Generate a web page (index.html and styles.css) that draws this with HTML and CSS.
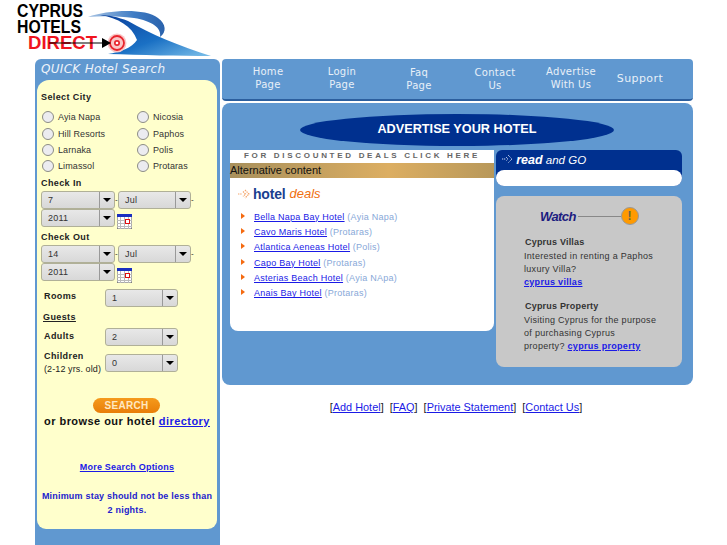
FILE: index.html
```html
<!DOCTYPE html>
<html lang="en">
<head>
    <meta charset="UTF-8">
    <title>Cyprus Hotels Direct</title>
    <link rel="stylesheet" href="styles.css">
</head>
<body>
    <div class="logo">
        <svg width="215" height="59" viewBox="0 0 215 59">
            <defs>
                <linearGradient id="swoosh" x1="0" y1="0" x2="1" y2="1">
                    <stop offset="0" stop-color="#0b3f9c"/>
                    <stop offset="0.55" stop-color="#1a70c4"/>
                    <stop offset="1" stop-color="#7cc0ea"/>
                </linearGradient>
                <linearGradient id="arc" x1="0" y1="0" x2="1" y2="0">
                    <stop offset="0" stop-color="#a8c4e4"/>
                    <stop offset="0.6" stop-color="#3f7cc4"/>
                    <stop offset="1" stop-color="#2a62ac"/>
                </linearGradient>
            </defs>
            <path d="M88 17 C108 10 145 8 158 18 C166 24 167 32 160 37 C162 28 152 21 134 18 C118 16 102 16 88 17 Z" fill="url(#arc)"/>
            <path d="M100 15 C118 18 132 26 137 40 C132 48 120 52 108 54 C140 55 180 56 211 56 C180 46 150 34 128 21 C118 17 108 15 100 15 Z" fill="url(#swoosh)"/>
            <text x="17" y="17" class="logo-black" textLength="66" lengthAdjust="spacingAndGlyphs">CYPRUS</text>
            <text x="17" y="33" class="logo-black" textLength="64" lengthAdjust="spacingAndGlyphs">HOTELS</text>
            <text x="28" y="49" class="logo-red" textLength="69" lengthAdjust="spacingAndGlyphs">DIRECT</text>
            <circle cx="117" cy="43" r="9.5" fill="#f9c6c6"/>
            <circle cx="117" cy="43" r="7" fill="none" stroke="#e8242c" stroke-width="1.8"/>
            <circle cx="117" cy="43" r="3" fill="#e8242c"/>
            <circle cx="117" cy="43" r="1.3" fill="#fff"/>
            <path d="M49 43 H104" stroke="#000" stroke-width="1.2"/>
            <path d="M102 38 L111 43 L102 48 Z" fill="#000"/>
        </svg>
    </div>

    <div class="page">
        <div class="left-col">
            <h3 class="quick-title">QUICK Hotel Search</h3>
            <div class="search-box">
                <div class="label city-label">Select City</div>
                <div class="city-grid">
                    <label class="city"><span class="radio"></span>Ayia Napa</label>
                    <label class="city"><span class="radio"></span>Nicosia</label>
                    <label class="city"><span class="radio"></span>Hill Resorts</label>
                    <label class="city"><span class="radio"></span>Paphos</label>
                    <label class="city"><span class="radio"></span>Larnaka</label>
                    <label class="city"><span class="radio"></span>Polis</label>
                    <label class="city"><span class="radio"></span>Limassol</label>
                    <label class="city"><span class="radio"></span>Protaras</label>
                </div>

                <div class="label date-label">Check In</div>
                <div class="date-row">
                    <div class="sel"><span class="sel-val">7</span><span class="sel-btn"></span></div><span class="dash">-</span>
                    <div class="sel"><span class="sel-val">Jul</span><span class="sel-btn"></span></div><span class="dash">-</span>
                </div>
                <div class="date-row">
                    <div class="sel"><span class="sel-val">2011</span><span class="sel-btn"></span></div>
                    <svg class="cal" width="15" height="15" viewBox="0 0 15 15">
                        <rect width="15" height="15" fill="#fff" stroke="#555"/>
                        <rect width="15" height="3" fill="#1a2fc0"/>
                        <path d="M0 6.5H15M0 9.5H15M0 12.5H15M3.5 3V15M7.5 3V15M11.5 3V15" stroke="#bbb" stroke-width="1"/>
                        <rect x="8.5" y="5.5" width="4" height="4" fill="#fff" stroke="#e01010"/>
                    </svg>
                </div>

                <div class="label date-label out">Check Out</div>
                <div class="date-row">
                    <div class="sel"><span class="sel-val">14</span><span class="sel-btn"></span></div><span class="dash">-</span>
                    <div class="sel"><span class="sel-val">Jul</span><span class="sel-btn"></span></div><span class="dash">-</span>
                </div>
                <div class="date-row">
                    <div class="sel"><span class="sel-val">2011</span><span class="sel-btn"></span></div>
                    <svg class="cal" width="15" height="15" viewBox="0 0 15 15">
                        <rect width="15" height="15" fill="#fff" stroke="#555"/>
                        <rect width="15" height="3" fill="#1a2fc0"/>
                        <path d="M0 6.5H15M0 9.5H15M0 12.5H15M3.5 3V15M7.5 3V15M11.5 3V15" stroke="#bbb" stroke-width="1"/>
                        <rect x="8.5" y="5.5" width="4" height="4" fill="#fff" stroke="#e01010"/>
                    </svg>
                </div>

                <div class="guest-row rooms">
                    <div class="label guest-label">Rooms</div>
                    <div class="sel"><span class="sel-val">1</span><span class="sel-btn"></span></div>
                </div>
                <div class="label guests-head">Guests</div>
                <div class="guest-row adults">
                    <div class="label guest-label">Adults</div>
                    <div class="sel"><span class="sel-val">2</span><span class="sel-btn"></span></div>
                </div>
                <div class="guest-row children">
                    <div class="label guest-label">Children<br><span class="ages">(2-12 yrs. old)</span></div>
                    <div class="sel"><span class="sel-val">0</span><span class="sel-btn"></span></div>
                </div>

                <div class="search-btn">SEARCH</div>
                <div class="browse">or browse our hotel <a href="#">directory</a></div>
                <div class="more"><a href="#">More Search Options</a></div>
                <div class="min-stay">Minimum stay should not be less than<br>2 nights.</div>
            </div>
        </div>

        <div class="right-col">
            <div class="nav">
                <a class="nav-item" href="#">Home<br>Page</a>
                <a class="nav-item login" href="#">Login<br>Page</a>
                <a class="nav-item low faq" href="#">Faq<br>Page</a>
                <a class="nav-item low" href="#">Contact<br>Us</a>
                <a class="nav-item" href="#">Advertise<br>With Us</a>
                <a class="nav-item support" href="#">Support</a>
            </div>

            <div class="main">
                <div class="advert">ADVERTISE YOUR HOTEL</div>
                <div class="columns">
                    <div class="deals">
                        <div class="deals-strip">FOR DISCOUNTED DEALS CLICK HERE</div>
                        <div class="alt-bar">Alternative content</div>
                        <div class="deals-head">
                            <svg width="12" height="12" viewBox="0 0 12 12">
                                <path d="M0 6H4M7 2L11 6L7 10M5 3.5L7.5 6L5 8.5" fill="none" stroke="#f5a468" stroke-width="1.2" stroke-dasharray="1.4 0.8"/>
                            </svg>
                            <span class="dh-hotel">hotel</span> <span class="dh-deals">deals</span>
                        </div>
                        <ul class="deal-list">
                            <li><a href="#">Bella Napa Bay Hotel</a> <span>(Ayia Napa)</span></li>
                            <li><a href="#">Cavo Maris Hotel</a> <span>(Protaras)</span></li>
                            <li><a href="#">Atlantica Aeneas Hotel</a> <span>(Polis)</span></li>
                            <li><a href="#">Capo Bay Hotel</a> <span>(Protaras)</span></li>
                            <li><a href="#">Asterias Beach Hotel</a> <span>(Ayia NApa)</span></li>
                            <li><a href="#">Anais Bay Hotel</a> <span>(Protaras)</span></li>
                        </ul>
                    </div>

                    <div class="side">
                        <div class="read-go">
                            <div class="read-title">
                                <svg width="11" height="10" viewBox="0 0 11 10">
                                    <path d="M0 5H4M6 1L10 5L6 9M4 3L6 5L4 7" fill="none" stroke="#c8d4ee" stroke-width="1" stroke-dasharray="1.2 0.7"/>
                                </svg>
                                <b>read</b> and GO
                            </div>
                            <div class="read-pill"></div>
                        </div>
                        <div class="watch">
                            <div class="watch-head">
                                <span class="watch-title">Watch</span>
                                <span class="watch-line"></span>
                                <span class="watch-badge">!</span>
                            </div>
                            <h4>Cyprus Villas</h4>
                            <p>Interested in renting a Paphos<br>luxury Villa?<br><a href="#">cyprus villas</a></p>
                            <h4 class="second">Cyprus Property</h4>
                            <p>Visiting Cyprus for the purpose<br>of purchasing Cyprus<br>property? <a href="#">cyprus property</a></p>
                        </div>
                    </div>
                </div>
            </div>

            <div class="foot-links">
                [<a href="#">Add Hotel</a>]&nbsp; [<a href="#">FAQ</a>]&nbsp; [<a href="#">Private Statement</a>]&nbsp; [<a href="#">Contact Us</a>]
            </div>
        </div>
    </div>
</body>
</html>
```

FILE: styles.css
```css
html, body {
    margin: 0;
    height: 545px;
    overflow: hidden;
    background-color: #fff;
}
body {
    font-family: "Liberation Sans", Arial, sans-serif;
    font-size: 9px;
    color: #222;
}
a {
    color: #1a1ae6;
}

/* logo */
.logo {
    height: 59px;
    line-height: 0;
}
.logo-black {
    font: bold 18px "Liberation Sans", Arial, sans-serif;
    fill: #000;
}
.logo-red {
    font: bold 18px "Liberation Sans", Arial, sans-serif;
    fill: #f0141e;
}

.page {
    display: flex;
    align-items: flex-start;
    padding-left: 35px;
}

/* left column */
.left-col {
    width: 185px;
    height: 486px;
    background-color: #6098d0;
    border-radius: 6px 6px 0 0;
    margin-right: 2px;
}
.quick-title {
    margin: 0;
    height: 21px;
    padding-left: 6px;
    font: italic normal 12px/21px "DejaVu Sans", sans-serif;
    letter-spacing: 0.3px;
    color: #eef3fa;
}
.search-box {
    box-sizing: border-box;
    width: 180px;
    height: 449px;
    margin-left: 2px;
    padding: 12px 0 0 4px;
    background-color: #ffffcc;
    border-radius: 12px 12px 9px 9px;
}
.label {
    font-weight: bold;
    letter-spacing: 0.4px;
    color: #222;
    line-height: 11px;
}
.city-grid {
    display: grid;
    grid-template-columns: 95px 1fr;
    grid-auto-rows: 16.4px;
    margin: 6px 0 0 1px;
}
.city {
    display: flex;
    align-items: center;
    letter-spacing: 0.1px;
    color: #333;
}
.radio {
    box-sizing: border-box;
    width: 12px;
    height: 12px;
    margin-right: 4px;
    border: 1px solid #8c8c84;
    border-radius: 50%;
    background-color: #ececf0;
}
.date-label {
    margin: 3px 0 2.4px;
}
.date-label.out {
    margin: 5px 0 2.5px;
}
.date-row {
    display: flex;
    align-items: flex-start;
    height: 18px;
}
.sel {
    box-sizing: border-box;
    display: flex;
    width: 74px;
    height: 18px;
    background: linear-gradient(#e8e8e8, #d8d8d8);
    border: 1px solid #b0b098;
    border-radius: 3px;
    color: #333;
    letter-spacing: 0.2px;
}
.sel-val {
    flex: 1;
    padding-left: 6px;
    line-height: 17px;
}
.sel-btn {
    position: relative;
    width: 14px;
    border-left: 1px solid #999;
}
.sel-btn::after {
    content: "";
    position: absolute;
    left: 3px;
    top: 6px;
    border: 4px solid transparent;
    border-top: 4px solid #000;
    border-bottom: 0;
}
.dash {
    width: 3px;
    line-height: 17px;
    font-size: 8px;
}
.date-row .sel + .dash + .sel,
.guest-row .sel {
    width: 73px;
}
.cal {
    margin: 5px 0 0 2px;
}
.guest-row {
    display: flex;
    align-items: flex-start;
}
.guest-label {
    width: 61px;
    padding-left: 3px;
}
.rooms {
    margin-top: 7.5px;
}
.rooms .guest-label {
    padding-top: 2px;
}
.adults .guest-label {
    padding-top: 3px;
}
.guests-head {
    margin: 5px 0 0 2px;
    text-decoration: underline;
}
.adults {
    margin-top: 5px;
}
.children {
    margin-top: 8px;
}
.children .guest-label {
    margin-top: -3px;
}
.ages {
    font-weight: normal;
    letter-spacing: 0.1px;
    line-height: 15px;
}
.search-btn {
    width: 67px;
    height: 15px;
    margin: 21px 0 0 52px;
    background: linear-gradient(#f59a1c, #e87e08);
    border-radius: 8px;
    text-align: center;
    font-weight: bold;
    font-size: 10px;
    line-height: 15px;
    letter-spacing: 0.3px;
    color: #ffe8c0;
}
.browse {
    width: 172px;
    margin-top: 1px;
    text-align: center;
    white-space: nowrap;
    font-size: 11px;
    font-weight: bold;
    line-height: 15px;
    letter-spacing: 0.45px;
    color: #111;
}
.more {
    width: 172px;
    margin-top: 31px;
    text-align: center;
    font-weight: bold;
    letter-spacing: 0.2px;
    line-height: 14px;
}
.min-stay {
    width: 172px;
    margin-top: 15px;
    text-align: center;
    white-space: nowrap;
    font-weight: bold;
    letter-spacing: 0.2px;
    line-height: 14px;
    color: #2222cc;
}

/* right column */
.right-col {
    width: 471px;
}
.nav {
    display: flex;
    box-sizing: border-box;
    height: 42px;
    padding-left: 8px;
    background-color: #6098d0;
    border-bottom: 2px solid #2c5f9e;
    border-radius: 4px;
    font: 10px/13px "DejaVu Sans", sans-serif;
}
.nav-item {
    width: 76px;
    padding-top: 6px;
    text-align: center;
    letter-spacing: 0.3px;
    text-decoration: none;
    color: #e8f0f8;
}
.nav-item.low {
    padding-top: 7px;
}
.nav-item.login {
    margin-left: -2px;
}
.nav-item.faq {
    margin-left: 1px;
}
.nav-item.support {
    width: 62px;
    padding-top: 13px;
    font-size: 11px;
    letter-spacing: 0.4px;
}
.main {
    box-sizing: border-box;
    height: 282px;
    margin-top: 2px;
    padding: 11px 0 0 8px;
    background-color: #6098d0;
    border-radius: 8px;
}
.advert {
    width: 314px;
    height: 32px;
    margin: 0 0 4px 70px;
    background-color: #00308f;
    border-radius: 50%;
    text-align: center;
    font-size: 12.7px;
    font-weight: bold;
    line-height: 31px;
    color: #fff;
}
.columns {
    display: flex;
    align-items: flex-start;
}
.deals {
    width: 264px;
    height: 181px;
    margin-right: 2px;
    background-color: #fff;
    border-radius: 0 0 8px 8px;
}
.deals-strip {
    height: 13px;
    text-align: center;
    font-size: 8px;
    font-weight: bold;
    line-height: 12px;
    letter-spacing: 2.7px;
    color: #666;
}
.alt-bar {
    height: 15px;
    background: linear-gradient(90deg, #a8905c, #dcae62 60%, #b8985a);
    font-size: 11px;
    line-height: 15px;
    color: #111;
}
.deals-head {
    display: flex;
    align-items: center;
    height: 31.5px;
    padding-left: 8px;
    font: bold 14px "Liberation Sans", Arial, sans-serif;
}
.deals-head svg {
    margin-right: 3px;
}
.dh-hotel {
    margin-right: 4px;
    letter-spacing: -0.2px;
    color: #1a3f8f;
}
.dh-deals {
    font-size: 13px;
    font-style: italic;
    font-weight: normal;
    color: #f07010;
}
.deal-list {
    margin: 0;
    padding: 0;
    list-style: none;
    letter-spacing: 0.25px;
}
.deal-list li {
    position: relative;
    height: 15.4px;
    padding-left: 24px;
    line-height: 15px;
}
.deal-list li::before {
    content: "";
    position: absolute;
    left: 11px;
    top: 3px;
    border-left: 4px solid #f56a10;
    border-top: 3.5px solid transparent;
    border-bottom: 3.5px solid transparent;
}
.deal-list span {
    color: #88a8d8;
}
.side {
    width: 186px;
}
.read-go {
    height: 36px;
    background-color: #00308f;
    border-radius: 6px 6px 8px 8px;
}
.read-title {
    height: 20px;
    padding-left: 6px;
    font: italic 11.5px/20px "Liberation Sans", Arial, sans-serif;
    color: #fff;
}
.read-title b {
    font-size: 12.5px;
}
.read-pill {
    height: 16px;
    background-color: #fff;
    border-radius: 8px;
}
.watch {
    box-sizing: border-box;
    height: 171px;
    margin-top: 10px;
    padding: 11px 0 0 29px;
    background-color: #c8c8c8;
    border-radius: 8px;
    letter-spacing: 0.3px;
    line-height: 13px;
    color: #333;
}
.watch-head {
    display: flex;
    align-items: center;
    height: 20px;
    margin: -1px 0 10px 15px;
}
.watch-title {
    font-size: 13px;
    font-style: italic;
    font-weight: bold;
    letter-spacing: -0.6px;
    color: #1c1c80;
}
.watch-line {
    width: 43px;
    height: 1px;
    margin-left: 2px;
    background-color: #888;
}
.watch-badge {
    width: 16px;
    height: 16px;
    border: 1px solid #999;
    border-radius: 50%;
    background-color: #ff9a00;
    text-align: center;
    font-size: 12px;
    font-weight: bold;
    line-height: 16px;
    color: #664;
}
.watch h4 {
    margin: 0;
    font-size: 9px;
    line-height: 13px;
    letter-spacing: 0.2px;
}
.watch h4.second {
    margin-top: 11px;
}
.watch p {
    margin: 1px 0 0 -1px;
}
.watch a {
    font-weight: bold;
    letter-spacing: 0.3px;
}
.foot-links {
    margin-top: 15px;
    padding-right: 3px;
    text-align: center;
    font-size: 10.9px;
    line-height: 15px;
    color: #222;
}
```
